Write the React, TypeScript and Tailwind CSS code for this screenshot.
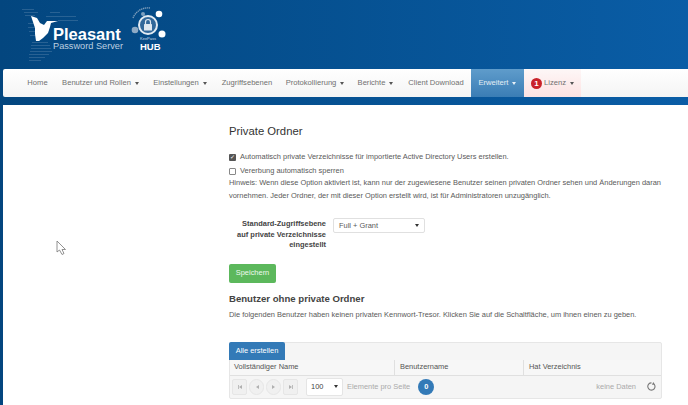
import React from "react";

const Caret = ({ color = "#555" }: { color?: string }) => (
  <span className="inline-block ml-[4px] w-0 h-0 border-x-[2.5px] border-x-transparent border-t-[3px]" style={{ borderTopColor: color }} />
);

const NavItem = ({ label, caret, w }: { label: string; caret?: boolean; w: string }) => (
  <div className={`${w} flex items-center justify-center text-[#707070] whitespace-nowrap`}>
    {label}
    {caret && <Caret />}
  </div>
);

const Bird = () => (
  <svg width="70" height="60" viewBox="0 0 70 60" className="absolute left-[20px] top-[6px]">
    <g fill="#6f93b6" opacity="0.35">
      <rect x="2" y="3" width="12" height="1" />
      <rect x="4" y="6" width="14" height="1" />
      <rect x="5" y="9" width="10" height="1" />
      <rect x="30" y="6" width="10" height="1" />
      <rect x="26" y="10" width="30" height="1" />
      <rect x="38" y="14" width="20" height="1" />
      <rect x="8" y="17" width="6" height="1" />
      <rect x="8" y="21" width="10" height="1" />
      <rect x="9" y="25" width="10" height="1" />
      <rect x="10" y="29" width="12" height="1" />
      <rect x="12" y="36" width="16" height="1" />
      <rect x="11" y="39" width="19" height="1" />
      <rect x="11" y="42" width="20" height="1" />
      <rect x="10" y="45" width="22" height="1" />
      <rect x="9" y="48" width="20" height="1" />
      <rect x="9" y="51" width="16" height="1" />
      <rect x="9" y="54" width="12" height="1" />
    </g>
    <path d="M11 10 L17 12 L20 17 L24 19 L27 15 L31 15 L38 15 L31 17 L30 21 L28 27 L23 32 L19 35 L16 35 L15 28 L15 22 Z" fill="#fff" />
  </svg>
);

const HubLogo = () => (
  <svg width="44" height="44" viewBox="0 0 44 44" className="absolute left-[128px] top-[6px]">
    <path d="M5 12 A16 16 0 0 1 22 2" fill="none" stroke="#7d9dbb" strokeWidth="1.4" strokeDasharray="1.4 0.6" />
    <circle cx="15" cy="8" r="2" fill="#7ea0bf" />
    <circle cx="7" cy="24" r="3.3" fill="#8eaac5" />
    <circle cx="31" cy="8" r="3.3" fill="#fff" />
    <circle cx="34" cy="28" r="3.5" fill="#fff" />
    <circle cx="20" cy="19" r="9" fill="#32689a" stroke="#e3ebf2" strokeWidth="2" />
    <rect x="16" y="18" width="8" height="6.5" rx="0.6" fill="#dfe8f0" />
    <path d="M17.5 18 v-2 a2.5 2.5 0 0 1 5 0 v2" fill="none" stroke="#dfe8f0" strokeWidth="1.2" />
  </svg>
);

const Pager = ({ children, round, w = "w-[15px]" }: { children: React.ReactNode; round?: boolean; w?: string }) => (
  <div className={`${w} h-[16px] border border-[#e6e6e6] bg-[#f0f0f0] flex items-center justify-center ${round ? "rounded-full" : "rounded-[2px]"}`}>
    {children}
  </div>
);

const Tri = ({ d }: { d: string }) => (
  <svg width="6" height="6" viewBox="0 0 6 6"><path d={d} fill="#b0b0b0" /></svg>
);

export default function App() {
  return (
    <div className="relative w-[688px] h-[405px] overflow-hidden bg-gradient-to-r from-[#03467f] to-[#0a5da6] font-['Liberation_Sans',Arial,sans-serif] text-[7.45px]">
      <header className="relative h-[69px]">
        <Bird />
        <div className="absolute left-[53px] top-[27px] text-white font-bold text-[16.5px] leading-[14px]">Pleasant</div>
        <div className="absolute left-[53px] top-[41px] text-[#bccfe0] text-[9.2px] leading-[11px]">Password Server</div>
        <HubLogo />
        <div className="absolute left-[140px] top-[37px] text-[#cfdce8] text-[4px] leading-[4px]">KeePass</div>
        <div className="absolute left-[140px] top-[42px] text-white font-bold text-[9.5px] leading-[10px]">HUB</div>
      </header>

      <nav className="ml-[3px] h-[28px] flex items-stretch rounded-l-[2px] bg-gradient-to-b from-white to-[#f4f4f4] pl-[17px] text-[7.6px]">
        <NavItem label="Home" w="w-[35px]" />
        <NavItem label="Benutzer und Rollen" caret w="w-[91px]" />
        <NavItem label="Einstellungen" caret w="w-[68px]" />
        <NavItem label="Zugriffsebenen" w="w-[66px]" />
        <NavItem label="Protokollierung" caret w="w-[70px]" />
        <NavItem label="Berichte" caret w="w-[51px]" />
        <NavItem label="Client Download" w="w-[70px]" />
        <div className="w-[53px] flex items-center justify-center text-[#e4eef6] bg-gradient-to-b from-[#5f9ccb] to-[#3a7db5]">
          Erweitert<Caret color="#e8f0f7" />
        </div>
        <div className="w-[57px] flex items-center justify-center text-[#707070] bg-gradient-to-b from-[#fdf7f7] to-[#fde2e2]">
          <span className="w-[11px] h-[11px] rounded-full bg-[#c9222a] text-white text-[8px] font-bold leading-[11px] text-center mr-[2px]">1</span>
          Lizenz<Caret />
        </div>
      </nav>

      <main className="mt-[8px] ml-[3px] h-[300px] bg-white pl-[226px] pt-[19px] text-[#5a5a5a] whitespace-nowrap">
        <h1 className="text-[11.3px] leading-[14px] text-[#333]">Private Ordner</h1>

        <div className="mt-[13px] flex items-center h-[12px]">
          <span className="w-[7px] h-[7px] rounded-[1px] bg-[#555] mr-[4px] flex items-center justify-center text-white text-[6px] leading-none">✓</span>
          Automatisch private Verzeichnisse für importierte Active Directory Users erstellen.
        </div>
        <div className="mt-[2px] flex items-center h-[12px]">
          <span className="w-[7px] h-[7px] rounded-[1px] border border-[#888] bg-white mr-[4px]" />
          Vererbung automatisch sperren
        </div>
        <p className="leading-[13px] -mt-[1px]">
          Hinweis: Wenn diese Option aktiviert ist, kann nur der zugewiesene Benutzer seinen privaten Ordner sehen und Änderungen daran<br />
          vornehmen. Jeder Ordner, der mit dieser Option erstellt wird, ist für Administratoren unzugänglich.
        </p>

        <div className="mt-[16px] flex items-start">
          <div className="w-[97px] text-right font-bold leading-[10.5px] text-[#444] pt-[1px]">
            Standard-Zugriffsebene<br />auf private Verzeichnisse<br />eingestellt
          </div>
          <div className="ml-[7px] w-[92px] h-[15px] border border-[#e0e0e0] rounded-[2px] flex items-center justify-between px-[5px]">
            Full + Grant
            <span className="w-0 h-0 border-x-[2.5px] border-x-transparent border-t-[3px] border-t-[#333]" />
          </div>
        </div>

        <button className="mt-[13px] block w-[47px] h-[19px] rounded-[2px] bg-[#5cb85c] text-[#eef8ee]">Speichern</button>

        <h2 className="mt-[10px] text-[9.6px] leading-[12px] font-bold text-[#444]">Benutzer ohne private Ordner</h2>
        <p className="mt-[4px] leading-[12px]">
          Die folgenden Benutzer haben keinen privaten Kennwort-Tresor. Klicken Sie auf die Schaltfläche, um ihnen einen zu geben.
        </p>

        <section className="mt-[21px] w-[433px] h-[57px] border border-[#e6e6e6] rounded-[2px] bg-[#f5f5f5] flex flex-col">
          <button className="w-[56px] h-[18px] -mt-px -ml-px bg-[#337ab7] rounded-t-[2px] text-white">Alle erstellen</button>
          <div className="flex h-[16px] border-b border-[#e0e0e0] text-[#555] items-center bg-[#f7f7f7] shrink-0">
            <div className="w-[165px] h-full flex items-center pl-[4px] border-r border-[#e0e0e0]">Vollständiger Name</div>
            <div className="w-[129px] h-full flex items-center pl-[5px] border-r border-[#e0e0e0]">Benutzername</div>
            <div className="pl-[5px]">Hat Verzeichnis</div>
          </div>
          <div className="flex-1 flex items-center pl-[2px] pr-[5px]">
            <div className="flex gap-[2px]">
              <Pager><Tri d="M1 1 h.8 v4 h-.8Z M5 1 L2 3 L5 5Z" /></Pager>
              <Pager round><Tri d="M5 1 L2 3 L5 5Z" /></Pager>
              <Pager round><Tri d="M1 1 L4 3 L1 5Z" /></Pager>
              <Pager><Tri d="M4.2 1 h.8 v4 h-.8Z M1 1 L4 3 L1 5Z" /></Pager>
            </div>
            <div className="ml-[8px] w-[37px] h-[18px] bg-white border border-[#e5e5e5] rounded-[2px] flex items-center justify-between px-[4px] text-[#444]">
              100
              <span className="w-0 h-0 border-x-[2.5px] border-x-transparent border-t-[3px] border-t-[#333]" />
            </div>
            <span className="ml-[4px] text-[#aaa]">Elemente pro Seite</span>
            <span className="ml-[8px] w-[16px] h-[16px] rounded-full bg-[#337ab7] text-white font-bold flex items-center justify-center">0</span>
            <span className="ml-auto text-[#aaa]">keine Daten</span>
            <svg width="9" height="9" viewBox="0 0 10 10" className="ml-[11px]">
              <path d="M8 2.5 A4 4 0 1 1 5 1" fill="none" stroke="#777" strokeWidth="1.2" />
              <path d="M7 0 L9 3 L5.5 3 Z" fill="#777" />
            </svg>
          </div>
        </section>
      </main>

      <svg width="12" height="16" viewBox="0 0 12 16" className="absolute left-[56px] top-[240px]">
        <path d="M1 1 V12 L3.5 10 L6 14.5 L8 13.5 L6 9.5 H9.5 Z" fill="#fff" stroke="#777" strokeWidth="0.8" />
      </svg>
    </div>
  );
}
